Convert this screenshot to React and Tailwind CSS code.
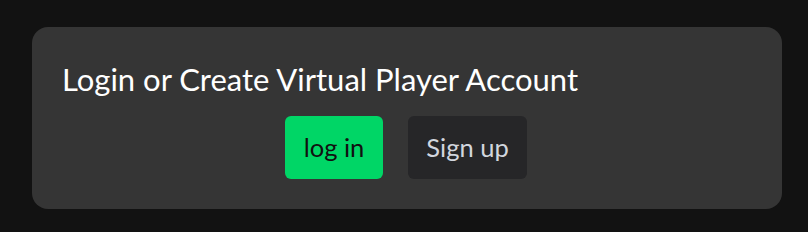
export default function App() {
  return (
    <div className="w-[808px] h-[232px] bg-[#121212] pt-[27px] pl-[32px]" style={{ fontFamily: '"Lato", "Noto Sans", sans-serif' }}>
      <div className="w-[750px] h-[182px] bg-[#353535] rounded-[16px] pl-[30px] pr-[32px] pt-[34px]">
        <h1 className="text-white text-[31px] leading-[36px]">Login or Create Virtual Player Account</h1>
        <div className="flex justify-center gap-[25px] mt-[19px]">
          <button className="w-[98px] h-[63px] bg-[#00d666] rounded-[6px] text-[#111] text-[25.5px]">log in</button>
          <button className="w-[119px] h-[63px] bg-[#262628] rounded-[6px] text-[#d2d6de] text-[25.5px]">Sign up</button>
        </div>
      </div>
    </div>
  );
}
